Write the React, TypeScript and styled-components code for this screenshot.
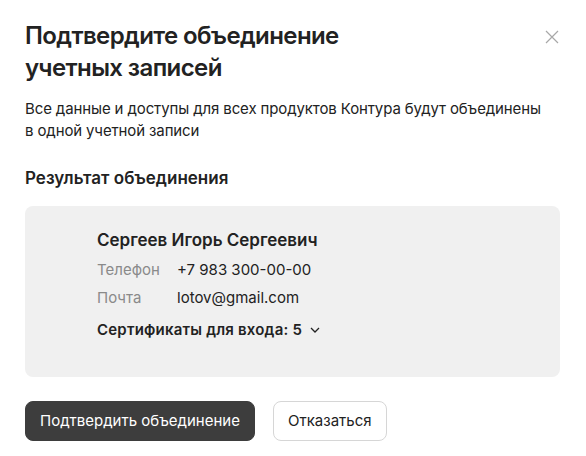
import React from "react";
import styled, { createGlobalStyle } from "styled-components";

const Global = createGlobalStyle`
  html, body { margin: 0; padding: 0; background: #fff; }
  body { font-family: Inter, "Noto Sans", sans-serif; color: #222; -webkit-font-smoothing: antialiased; }
`;

const Dialog = styled.div`
  width: 586px;
  box-sizing: border-box;
  padding: 20px 26px 0 25px;
  display: flex;
  flex-direction: column;
`;

const Header = styled.div`
  display: flex;
  justify-content: space-between;
  align-items: flex-start;
`;

const Title = styled.h1`
  margin: 0;
  font-size: 24px;
  line-height: 32px;
  font-weight: 600;
  color: #222;
  letter-spacing: -0.6px;
`;

const Close = styled.button`
  border: 0;
  background: none;
  padding: 0;
  margin-top: 9px;
  width: 16px;
  height: 16px;
  display: flex;
  cursor: pointer;
`;

const Lead = styled.p`
  margin: 14px 0 0;
  font-size: 15px;
  line-height: 22px;
  letter-spacing: -0.12px;
  color: #222;
`;

const SubTitle = styled.h2`
  margin: 24px 0 0;
  font-size: 17px;
  line-height: 24px;
  font-weight: 600;
  letter-spacing: 0;
`;

const Card = styled.div`
  margin-top: 16px;
  background: #f0f0f0;
  border-radius: 8px;
  padding: 21px 24px 36px 72px;
  display: flex;
  flex-direction: column;
`;

const Name = styled.div`
  font-size: 17px;
  line-height: 26px;
  font-weight: 600;
  letter-spacing: 0;
`;

const InfoGrid = styled.div`
  margin-top: 6px;
  display: grid;
  grid-template-columns: 80px auto;
  row-gap: 6px;
  font-size: 15px;
  line-height: 22px;
`;

const Label = styled.span`
  color: #8a8a8a;
`;

const Value = styled.span`
  color: #222;
`;

const Certs = styled.button`
  margin-top: 10px;
  border: 0;
  background: none;
  padding: 0;
  font: inherit;
  font-size: 15px;
  line-height: 22px;
  font-weight: 600;
  letter-spacing: 0.2px;
  color: #222;
  display: flex;
  align-items: center;
  gap: 7px;
  align-self: flex-start;
`;

const Actions = styled.div`
  margin-top: 24px;
  display: flex;
  gap: 18px;
`;

const Button = styled.button<{ $primary?: boolean }>`
  height: 40px;
  box-sizing: border-box;
  padding: 0 14px;
  border-radius: 8px;
  font-family: inherit;
  font-size: 15px;
  line-height: 20px;
  cursor: pointer;
  border: 1px solid ${(p) => (p.$primary ? "#3d3d3d" : "#d6d6d6")};
  background: ${(p) => (p.$primary ? "#3d3d3d" : "#fff")};
  color: ${(p) => (p.$primary ? "#fff" : "#222")};
`;

export default function App() {
  return (
    <>
      <Global />
      <Dialog>
        <Header>
          <Title>
            Подтвердите объединение
            <br />
            учетных записей
          </Title>
          <Close aria-label="Закрыть">
            <svg width="16" height="16" viewBox="0 0 16 16">
              <path d="M2 2 L14 14 M14 2 L2 14" stroke="#a8a8a8" strokeWidth="1.2" fill="none" />
            </svg>
          </Close>
        </Header>
        <Lead>
          Все данные и доступы для всех продуктов Контура будут объединены
          <br />в одной учетной записи
        </Lead>
        <SubTitle>Результат объединения</SubTitle>
        <Card>
          <Name>Сергеев Игорь Сергеевич</Name>
          <InfoGrid>
            <Label>Телефон</Label>
            <Value>+7 983 300-00-00</Value>
            <Label>Почта</Label>
            <Value>lotov@gmail.com</Value>
          </InfoGrid>
          <Certs>
            Сертификаты для входа: 5
            <svg width="12" height="12" viewBox="0 0 12 12">
              <path d="M2 4 L6 8 L10 4" stroke="#222" strokeWidth="1.3" fill="none" />
            </svg>
          </Certs>
        </Card>
        <Actions>
          <Button $primary>Подтвердить объединение</Button>
          <Button>Отказаться</Button>
        </Actions>
      </Dialog>
    </>
  );
}
